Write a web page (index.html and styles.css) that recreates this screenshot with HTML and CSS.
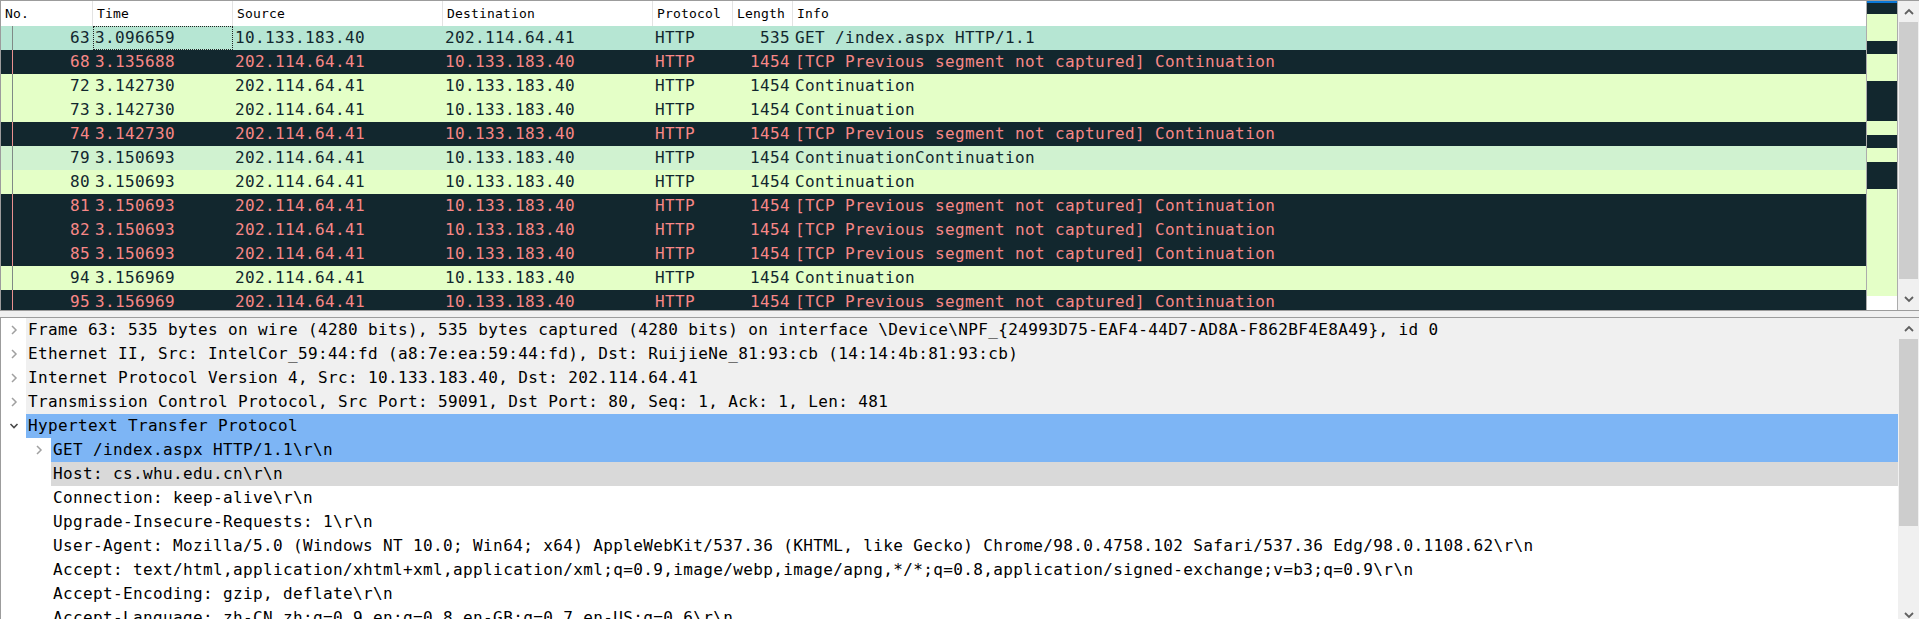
FILE: index.html
```html
<!DOCTYPE html>
<html>
<head>
<meta charset="utf-8">
<link rel="stylesheet" href="styles.css">
</head>
<body>
<div class="app">
  <section class="pane-list">
    <div class="list">
      <div class="hdr">
        <div class="c no">No.</div>
        <div class="c time">Time</div>
        <div class="c src">Source</div>
        <div class="c dst">Destination</div>
        <div class="c proto">Protocol</div>
        <div class="c len">Length</div>
        <div class="c info">Info</div>
      </div>
      <div class="rows">
        <div class="row sel"><div class="c no">63</div><div class="c time focus">3.096659</div><div class="c src">10.133.183.40</div><div class="c dst">202.114.64.41</div><div class="c proto">HTTP</div><div class="c len">535</div><div class="c info">GET /index.aspx HTTP/1.1</div></div>
        <div class="row bad"><div class="c no">68</div><div class="c time">3.135688</div><div class="c src">202.114.64.41</div><div class="c dst">10.133.183.40</div><div class="c proto">HTTP</div><div class="c len">1454</div><div class="c info">[TCP Previous segment not captured] Continuation</div></div>
        <div class="row http"><div class="c no">72</div><div class="c time">3.142730</div><div class="c src">202.114.64.41</div><div class="c dst">10.133.183.40</div><div class="c proto">HTTP</div><div class="c len">1454</div><div class="c info">Continuation</div></div>
        <div class="row http"><div class="c no">73</div><div class="c time">3.142730</div><div class="c src">202.114.64.41</div><div class="c dst">10.133.183.40</div><div class="c proto">HTTP</div><div class="c len">1454</div><div class="c info">Continuation</div></div>
        <div class="row bad"><div class="c no">74</div><div class="c time">3.142730</div><div class="c src">202.114.64.41</div><div class="c dst">10.133.183.40</div><div class="c proto">HTTP</div><div class="c len">1454</div><div class="c info">[TCP Previous segment not captured] Continuation</div></div>
        <div class="row rel"><div class="c no">79</div><div class="c time">3.150693</div><div class="c src">202.114.64.41</div><div class="c dst">10.133.183.40</div><div class="c proto">HTTP</div><div class="c len">1454</div><div class="c info">ContinuationContinuation</div></div>
        <div class="row http"><div class="c no">80</div><div class="c time">3.150693</div><div class="c src">202.114.64.41</div><div class="c dst">10.133.183.40</div><div class="c proto">HTTP</div><div class="c len">1454</div><div class="c info">Continuation</div></div>
        <div class="row bad"><div class="c no">81</div><div class="c time">3.150693</div><div class="c src">202.114.64.41</div><div class="c dst">10.133.183.40</div><div class="c proto">HTTP</div><div class="c len">1454</div><div class="c info">[TCP Previous segment not captured] Continuation</div></div>
        <div class="row bad"><div class="c no">82</div><div class="c time">3.150693</div><div class="c src">202.114.64.41</div><div class="c dst">10.133.183.40</div><div class="c proto">HTTP</div><div class="c len">1454</div><div class="c info">[TCP Previous segment not captured] Continuation</div></div>
        <div class="row bad"><div class="c no">85</div><div class="c time">3.150693</div><div class="c src">202.114.64.41</div><div class="c dst">10.133.183.40</div><div class="c proto">HTTP</div><div class="c len">1454</div><div class="c info">[TCP Previous segment not captured] Continuation</div></div>
        <div class="row http"><div class="c no">94</div><div class="c time">3.156969</div><div class="c src">202.114.64.41</div><div class="c dst">10.133.183.40</div><div class="c proto">HTTP</div><div class="c len">1454</div><div class="c info">Continuation</div></div>
        <div class="row bad"><div class="c no">95</div><div class="c time">3.156969</div><div class="c src">202.114.64.41</div><div class="c dst">10.133.183.40</div><div class="c proto">HTTP</div><div class="c len">1454</div><div class="c info">[TCP Previous segment not captured] Continuation</div></div>
      </div>
    </div>
    <div class="minimap">
      <div class="mm cur" style="height:2px"></div>
      <div class="mm dk" style="height:11px"></div>
      <div class="mm lt" style="height:27px"></div>
      <div class="mm dk" style="height:13px"></div>
      <div class="mm lt" style="height:27px"></div>
      <div class="mm dk" style="height:40px"></div>
      <div class="mm lt" style="height:14px"></div>
      <div class="mm dk" style="height:13px"></div>
      <div class="mm lt" style="height:14px"></div>
      <div class="mm dk" style="height:27px"></div>
      <div class="mm lt" style="height:107px"></div>
    </div>
    <div class="vscroll">
      <div class="sbtn"><svg width="10" height="7" viewBox="0 0 10 7"><polyline points="1,6 5,2 9,6" fill="none" stroke="#606060" stroke-width="1.8"/></svg></div>
      <div class="track"><div class="thumb t1"></div></div>
      <div class="sbtn"><svg width="10" height="7" viewBox="0 0 10 7"><polyline points="1,1 5,5 9,1" fill="none" stroke="#606060" stroke-width="1.8"/></svg></div>
    </div>
  </section>
  <div class="splitter"></div>
  <section class="pane-tree">
    <div class="tree">
      <div class="node lvl0"><span class="tw"><svg width="8" height="10" viewBox="0 0 8 10"><polyline points="2,1 6,5 2,9" fill="none" stroke="#a0a0a0" stroke-width="1.5"/></svg></span><span class="lbl">Frame 63: 535 bytes on wire (4280 bits), 535 bytes captured (4280 bits) on interface \Device\NPF_{24993D75-EAF4-44D7-AD8A-F862BF4E8A49}, id 0</span></div>
      <div class="node lvl0"><span class="tw"><svg width="8" height="10" viewBox="0 0 8 10"><polyline points="2,1 6,5 2,9" fill="none" stroke="#a0a0a0" stroke-width="1.5"/></svg></span><span class="lbl">Ethernet II, Src: IntelCor_59:44:fd (a8:7e:ea:59:44:fd), Dst: RuijieNe_81:93:cb (14:14:4b:81:93:cb)</span></div>
      <div class="node lvl0"><span class="tw"><svg width="8" height="10" viewBox="0 0 8 10"><polyline points="2,1 6,5 2,9" fill="none" stroke="#a0a0a0" stroke-width="1.5"/></svg></span><span class="lbl">Internet Protocol Version 4, Src: 10.133.183.40, Dst: 202.114.64.41</span></div>
      <div class="node lvl0"><span class="tw"><svg width="8" height="10" viewBox="0 0 8 10"><polyline points="2,1 6,5 2,9" fill="none" stroke="#a0a0a0" stroke-width="1.5"/></svg></span><span class="lbl">Transmission Control Protocol, Src Port: 59091, Dst Port: 80, Seq: 1, Ack: 1, Len: 481</span></div>
      <div class="node hl"><span class="tw"><svg width="10" height="8" viewBox="0 0 10 8"><polyline points="1.5,2 5,5.5 8.5,2" fill="none" stroke="#4a4a4a" stroke-width="1.6"/></svg></span><span class="lbl">Hypertext Transfer Protocol</span></div>
      <div class="node l1 hl"><span class="tw"><svg width="8" height="10" viewBox="0 0 8 10"><polyline points="2,1 6,5 2,9" fill="none" stroke="#a0a0a0" stroke-width="1.5"/></svg></span><span class="lbl">GET /index.aspx HTTP/1.1\r\n</span></div>
      <div class="node l1 hov"><span class="tw"></span><span class="lbl">Host: cs.whu.edu.cn\r\n</span></div>
      <div class="node l1"><span class="tw"></span><span class="lbl">Connection: keep-alive\r\n</span></div>
      <div class="node l1"><span class="tw"></span><span class="lbl">Upgrade-Insecure-Requests: 1\r\n</span></div>
      <div class="node l1"><span class="tw"></span><span class="lbl">User-Agent: Mozilla/5.0 (Windows NT 10.0; Win64; x64) AppleWebKit/537.36 (KHTML, like Gecko) Chrome/98.0.4758.102 Safari/537.36 Edg/98.0.1108.62\r\n</span></div>
      <div class="node l1"><span class="tw"></span><span class="lbl">Accept: text/html,application/xhtml+xml,application/xml;q=0.9,image/webp,image/apng,*/*;q=0.8,application/signed-exchange;v=b3;q=0.9\r\n</span></div>
      <div class="node l1"><span class="tw"></span><span class="lbl">Accept-Encoding: gzip, deflate\r\n</span></div>
      <div class="node l1"><span class="tw"></span><span class="lbl">Accept-Language: zh-CN,zh;q=0.9,en;q=0.8,en-GB;q=0.7,en-US;q=0.6\r\n</span></div>
    </div>
    <div class="vscroll">
      <div class="sbtn"><svg width="10" height="7" viewBox="0 0 10 7"><polyline points="1,6 5,2 9,6" fill="none" stroke="#606060" stroke-width="1.8"/></svg></div>
      <div class="track"><div class="thumb t2"></div></div>
      <div class="sbtn"><svg width="10" height="7" viewBox="0 0 10 7"><polyline points="1,1 5,5 9,1" fill="none" stroke="#606060" stroke-width="1.8"/></svg></div>
    </div>
  </section>
</div>
</body>
</html>
```

FILE: styles.css
```css
* { box-sizing: border-box; margin: 0; padding: 0; }
html, body { width: 1919px; height: 619px; overflow: hidden; background: #fff; }
body { font-family: "DejaVu Sans Mono", monospace; color: #000; }

.app { display: flex; flex-direction: column; width: 1919px; }

/* ---------- packet list ---------- */
.pane-list {
  display: flex;
  flex: none;
  height: 311px;
  border-top: 1px solid #9c9c9c;
  border-bottom: 1px solid #9c9c9c;
  border-left: 1px solid #9c9c9c;
}
.list { width: 1865px; flex: none; display: flex; flex-direction: column; overflow: hidden; }

.hdr {
  display: flex;
  height: 25px;
  flex: none;
  background: #fff;
  font-size: 13px;
  letter-spacing: 0.17px;
  line-height: 25px;
  color: #000;
}
.hdr .c { padding-left: 4px; border-right: 1px solid #e3e3e3; }
.hdr .c.info { border-right: none; }

.c { flex: none; white-space: nowrap; overflow: hidden; }
.c.no { width: 92px; }
.c.time { width: 140px; }
.c.src { width: 210px; }
.c.dst { width: 210px; }
.c.proto { width: 80px; }
.c.len { width: 60px; }
.c.info { flex: 1; }

.rows { display: flex; flex-direction: column; }
.row {
  display: flex;
  height: 24px;
  flex: none;
  font-size: 16px;
  letter-spacing: 0.37px;
  line-height: 24px;
}
.row .c { padding-left: 2px; }
.row .c.no, .row .c.len { text-align: right; padding-left: 0; padding-right: 3px; }
.row .c.no {
  background-image: linear-gradient(#7f8a86, #7f8a86);
  background-repeat: no-repeat;
  background-size: 1px 100%;
  background-position: 11px 0;
}
.row.http { background: #e4ffc7; color: #12272e; }
.row.sel { background: #b6e6d3; color: #12272e; }
.row.rel { background: #d0f2d0; color: #12272e; }
.row.bad { background: #12272e; color: #f78787; }
.row.bad .c.no { background-image: linear-gradient(#e99090, #e99090); }
.row .c.focus { outline: 1px dotted #222; outline-offset: -1px; }

/* ---------- minimap ---------- */
.minimap {
  width: 32px;
  flex: none;
  border-left: 1px solid #acacac;
  border-right: 1px solid #acacac;
  display: flex;
  flex-direction: column;
  background: #fff;
}
.mm { flex: none; }
.mm.cur { background: #0a78d7; }
.mm.dk { background: #12272e; }
.mm.lt { background: #e4ffc7; }

/* ---------- scrollbars ---------- */
.vscroll {
  width: 21px;
  flex: none;
  background: #f0f0f0;
  display: flex;
  flex-direction: column;
}
.sbtn { height: 21px; flex: none; display: flex; align-items: center; justify-content: center; }
.track { flex: 1; }
.thumb { background: #cdcdcd; margin: 0 1px; }
.thumb.t1 { height: 257px; }
.thumb.t2 { height: 187px; }

.splitter { height: 6px; flex: none; background: #f0f0f0; }

/* ---------- details tree ---------- */
.pane-tree {
  display: flex;
  flex: none;
  height: 309px;
  border-top: 1px solid #9c9c9c;
  border-left: 1px solid #9c9c9c;
}
.tree { width: 1897px; flex: none; overflow: hidden; background: #fff; }
.node {
  display: flex;
  height: 24px;
  line-height: 24px;
  font-size: 16px;
  letter-spacing: 0.37px;
  white-space: nowrap;
}
.node.l1 { padding-left: 25px; }
.node .tw { width: 25px; flex: none; display: flex; align-items: center; justify-content: center; }
.node .lbl { flex: 1; padding-left: 2px; overflow: hidden; }
.node.lvl0 .lbl { background: #f0f0f0; }
.node.hl .lbl { background: #7db5f5; }
.node.hov .lbl { background: #d9d9d9; }
```
